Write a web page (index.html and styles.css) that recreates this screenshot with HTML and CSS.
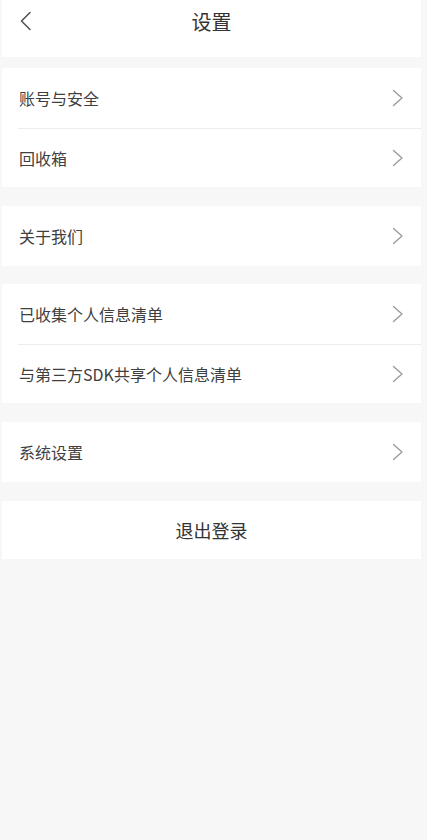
FILE: index.html
```html
<!DOCTYPE html>
<html lang="zh">
<head>
<meta charset="utf-8">
<title>设置</title>
<link rel="stylesheet" href="styles.css">
</head>
<body>
<div class="page">
  <header class="nav">
    <span class="back">
      <svg width="14" height="20" viewBox="0 0 14 20"><path d="M11 1.5 L2.5 10 L11 18.5" fill="none" stroke="#555" stroke-width="1.6" stroke-linecap="round" stroke-linejoin="round"/></svg>
    </span>
    <h1 class="title">设置</h1>
  </header>

  <section class="group g1">
    <div class="row"><span>账号与安全</span><svg class="arrow" width="12" height="18" viewBox="0 0 12 18"><path d="M1.5 1.5 L10 9 L1.5 16.5" fill="none" stroke="#9a9a9a" stroke-width="1.3" stroke-linecap="round" stroke-linejoin="round"/></svg></div>
    <div class="row"><span>回收箱</span><svg class="arrow" width="12" height="18" viewBox="0 0 12 18"><path d="M1.5 1.5 L10 9 L1.5 16.5" fill="none" stroke="#9a9a9a" stroke-width="1.3" stroke-linecap="round" stroke-linejoin="round"/></svg></div>
  </section>

  <section class="group">
    <div class="row"><span>关于我们</span><svg class="arrow" width="12" height="18" viewBox="0 0 12 18"><path d="M1.5 1.5 L10 9 L1.5 16.5" fill="none" stroke="#9a9a9a" stroke-width="1.3" stroke-linecap="round" stroke-linejoin="round"/></svg></div>
  </section>

  <section class="group g3">
    <div class="row"><span>已收集个人信息清单</span><svg class="arrow" width="12" height="18" viewBox="0 0 12 18"><path d="M1.5 1.5 L10 9 L1.5 16.5" fill="none" stroke="#9a9a9a" stroke-width="1.3" stroke-linecap="round" stroke-linejoin="round"/></svg></div>
    <div class="row"><span>与第三方SDK共享个人信息清单</span><svg class="arrow" width="12" height="18" viewBox="0 0 12 18"><path d="M1.5 1.5 L10 9 L1.5 16.5" fill="none" stroke="#9a9a9a" stroke-width="1.3" stroke-linecap="round" stroke-linejoin="round"/></svg></div>
  </section>

  <section class="group">
    <div class="row"><span>系统设置</span><svg class="arrow" width="12" height="18" viewBox="0 0 12 18"><path d="M1.5 1.5 L10 9 L1.5 16.5" fill="none" stroke="#9a9a9a" stroke-width="1.3" stroke-linecap="round" stroke-linejoin="round"/></svg></div>
  </section>

  <section class="group logout">退出登录</section>
</div>
</body>
</html>
```

FILE: styles.css
```css
html, body {
  margin: 0;
  padding: 0;
  background: #f7f7f7;
}
body {
  font-family: "Noto Sans CJK SC", "Noto Sans", sans-serif;
  color: #404040;
}
.page {
  margin: 0 6px 0 2px;
  min-height: 840px;
  display: flex;
  flex-direction: column;
}
.nav {
  height: 57px;
  background: #fff;
  position: relative;
  display: flex;
  justify-content: center;
}
.back {
  position: absolute;
  left: 17px;
  top: 11px;
  display: block;
  line-height: 0;
}
.title {
  margin: 0;
  font-size: 20px;
  font-weight: 400;
  color: #333;
  line-height: 44px;
  height: 44px;
}
.group {
  background: #fff;
  margin-top: 19px;
}
.g1 {
  margin-top: 11px;
}
.g3 {
  margin-top: 18px;
}
.row {
  height: 60px;
  box-sizing: border-box;
  display: flex;
  align-items: center;
  justify-content: space-between;
  padding: 0 17px 0 17px;
  font-size: 16px;
}
.row + .row {
  height: 59px;
  border-top: 1px solid #ececec;
  margin-left: 16px;
  padding-left: 1px;
}
.arrow {
  display: block;
  flex: none;
}
.logout {
  height: 58px;
  display: flex;
  align-items: center;
  justify-content: center;
  font-size: 18px;
  color: #333;
}
```
